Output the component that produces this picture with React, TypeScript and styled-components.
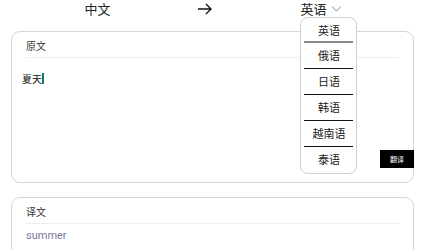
import React, { useState } from "react";
import styled, { createGlobalStyle } from "styled-components";

const GlobalStyle = createGlobalStyle`
  body {
    margin: 0;
    background: #ffffff;
    font-family: "Noto Sans CJK SC", "Noto Sans", sans-serif;
  }
`;

const Page = styled.div`
  position: relative;
  width: 426px;
  height: 250px;
  overflow: hidden;
  padding: 0 12px 0 11px;
  box-sizing: border-box;
`;

const Header = styled.div`
  display: flex;
  justify-content: center;
  align-items: center;
  height: 17px;
  margin-bottom: 14px;
  padding-right: 15px;
  font-size: 13px;
  color: #222;
`;

const LangCell = styled.div<{ $w: number }>`
  width: ${(p) => p.$w}px;
  display: flex;
  justify-content: center;
  align-items: center;
  line-height: 17px;
`;

const LangPicker = styled.span`
  position: relative;
  display: inline-block;
  margin-left: 2px;
`;

const Chevron = styled.span`
  position: absolute;
  left: 31px;
  top: 5px;
  display: flex;
`;

const Dropdown = styled.ul`
  position: absolute;
  top: 17px;
  left: 0;
  width: 57px;
  margin: 0;
  padding: 0;
  list-style: none;
  background: #fff;
  border: 1px solid #cfcfcf;
  border-radius: 8px;
  box-sizing: border-box;
  z-index: 5;
`;

const Option = styled.li<{ $first?: boolean; $last?: boolean }>`
  box-sizing: border-box;
  height: ${(p) => (p.$first ? 25 : 26)}px;
  line-height: 25px;
  margin: 0 3px;
  text-align: center;
  font-size: 11px;
  color: #1a1a1a;
  border-bottom: ${(p) =>
    p.$last ? "none" : p.$first ? "2px solid #8a8a8a" : "1px solid #111"};
`;

const Card = styled.div<{ $h: number }>`
  position: relative;
  height: ${(p) => p.$h}px;
  border: 1px solid #d6d6d6;
  border-radius: 9px;
  padding: 0 14px;
  box-sizing: border-box;
  margin-bottom: 14px;
`;

const Label = styled.div`
  font-size: 10px;
  color: #333;
  height: 25px;
  line-height: 27px;
  border-bottom: 1px solid #eeeeee;
`;

const Caret = styled.span`
  display: inline-block;
  width: 1.5px;
  height: 11px;
  background: #0d7a6a;
  vertical-align: -1px;
`;

const InputText = styled.div`
  margin: 14px 0 0 -4px;
  font-size: 10px;
  line-height: 14px;
  color: #111;
`;

const TranslateButton = styled.button`
  position: absolute;
  right: -1px;
  bottom: 14px;
  width: 34px;
  height: 18px;
  padding: 0;
  border: none;
  background: #000;
  color: #fff;
  font-size: 7px;
  font-family: "Noto Sans CJK SC", sans-serif;
  cursor: pointer;
`;

const Output = styled.div`
  margin-top: 5px;
  font-family: Roboto, "Noto Sans", sans-serif;
  font-size: 11px;
  color: #7a7898;
`;

const langs = ["英语", "俄语", "日语", "韩语", "越南语", "泰语"];

const App: React.FC = () => {
  const [text] = useState("夏天");

  return (
    <Page>
      <GlobalStyle />
      <Header>
        <LangCell $w={107}>中文</LangCell>
        <LangCell $w={108}>
          <svg width="16" height="12" viewBox="0 0 16 12">
            <path
              d="M1 6h13M9 1l5 5-5 5"
              fill="none"
              stroke="#111"
              strokeWidth="1.4"
            />
          </svg>
        </LangCell>
        <LangCell $w={107}>
          <LangPicker>
            英语
            <Chevron>
              <svg width="11" height="8" viewBox="0 0 11 8">
                <path d="M1 1.5l4.5 4.5 4.5-4.5" fill="none" stroke="#888" strokeWidth="1" />
              </svg>
            </Chevron>
            <Dropdown>
              {langs.map((l, i) => (
                <Option key={l} $first={i === 0} $last={i === langs.length - 1}>
                  {l}
                </Option>
              ))}
            </Dropdown>
          </LangPicker>
        </LangCell>
      </Header>

      <Card $h={152}>
        <Label>原文</Label>
        <InputText>
          {text}
          <Caret />
        </InputText>
        <TranslateButton>翻译</TranslateButton>
      </Card>

      <Card $h={80}>
        <Label>译文</Label>
        <Output>summer</Output>
      </Card>
    </Page>
  );
};

export default App;
